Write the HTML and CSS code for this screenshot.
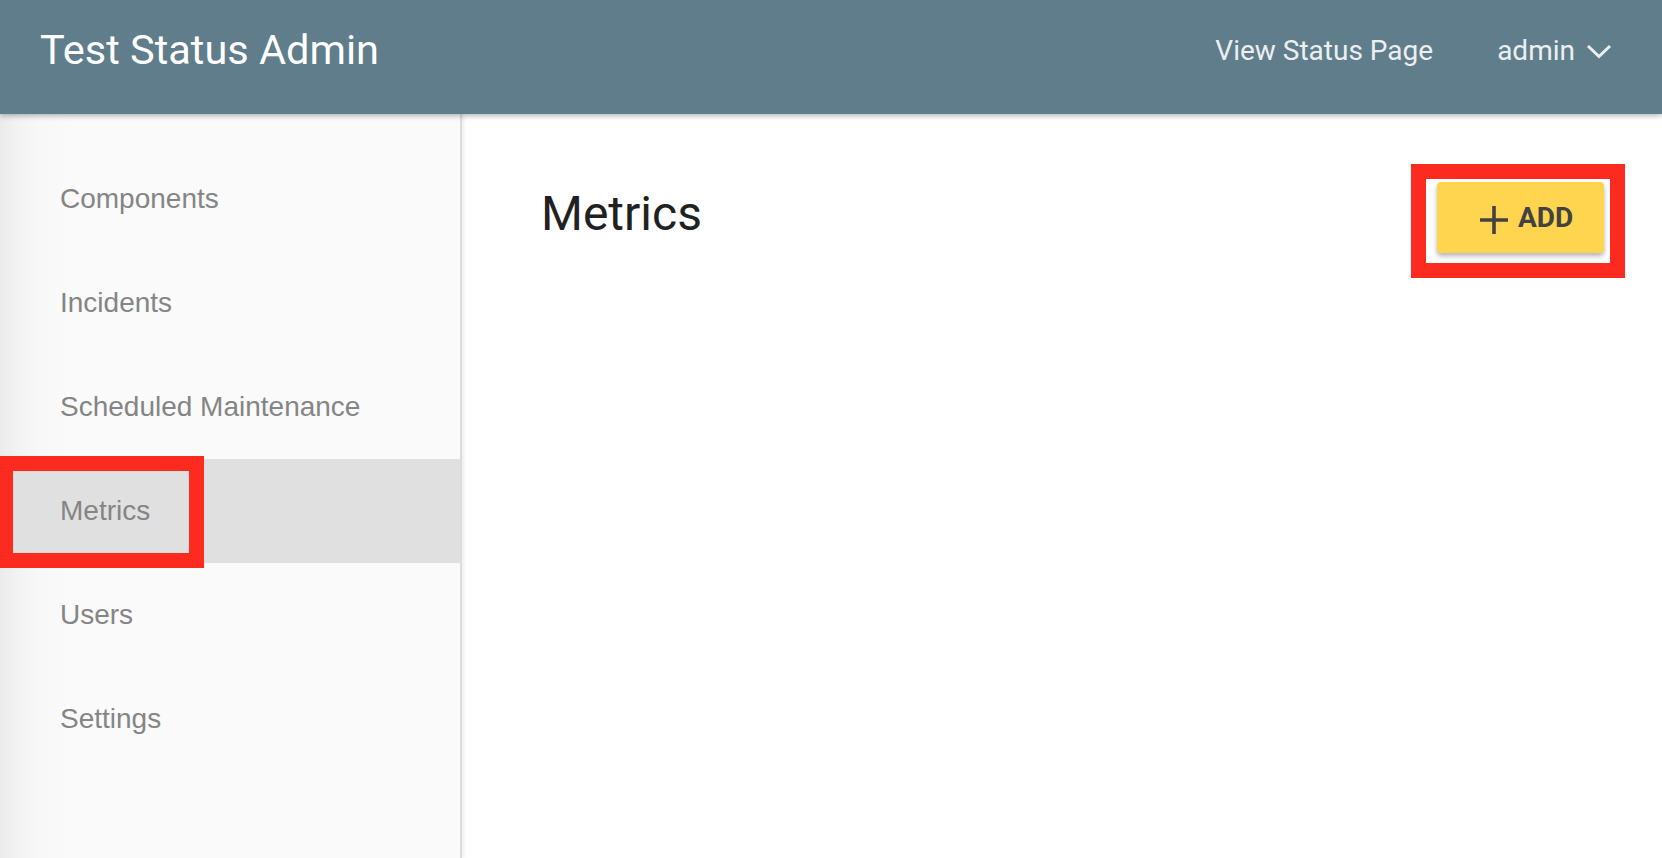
FILE: index.html
```html
<!DOCTYPE html>
<html lang="en">
<head>
<meta charset="utf-8">
<title>Test Status Admin</title>
<link rel="stylesheet" href="styles.css">
</head>
<body>
<div class="app">
  <header class="topbar">
    <div class="brand">Test Status Admin</div>
    <nav class="top-links">
      <a class="top-link" href="#">View Status Page</a>
      <a class="top-link user" href="#">admin
        <svg class="chevron" width="26" height="15" viewBox="0 0 26 15"><polyline points="2,2 13,12.5 24,2" fill="none" stroke="currentColor" stroke-width="3"/></svg>
      </a>
    </nav>
  </header>
  <div class="body">
    <aside class="sidebar">
      <ul class="side-nav">
        <li class="side-item">Components</li>
        <li class="side-item">Incidents</li>
        <li class="side-item">Scheduled Maintenance</li>
        <li class="side-item active">Metrics</li>
        <li class="side-item">Users</li>
        <li class="side-item">Settings</li>
      </ul>
      <div class="mark mark-side"></div>
    </aside>
    <main class="main">
      <div class="page-head">
        <h1 class="page-title">Metrics</h1>
        <div class="add-wrap">
          <button class="add-btn" type="button">
            <svg class="plus" width="28" height="28" viewBox="0 0 28 28"><path d="M14 0V28M0 14H28" stroke="currentColor" stroke-width="3.6" fill="none"/></svg>
            <span>ADD</span>
          </button>
          <div class="mark mark-add"></div>
        </div>
      </div>
    </main>
  </div>
</div>
</body>
</html>
```

FILE: styles.css
```css
html, body {
  margin: 0;
  padding: 0;
  height: 100%;
}
body {
  font-family: "Roboto", "Liberation Sans", sans-serif;
  background: #ffffff;
  overflow: hidden;
}
.app {
  display: flex;
  flex-direction: column;
  height: 100vh;
}
.topbar {
  position: relative;
  z-index: 2;
  flex: 0 0 114px;
  height: 114px;
  background: #607d8b;
  display: flex;
  align-items: flex-start;
  justify-content: space-between;
  padding: 0 50px 0 40px;
  box-shadow: 0 2px 5px rgba(0, 0, 0, 0.28);
}
.brand {
  color: #ffffff;
  font-size: 41.5px;
  padding-top: 25px;
  line-height: normal;
}
.top-links {
  display: flex;
  align-items: center;
  gap: 64px;
  padding-top: 34px;
}
.top-link {
  color: #eceff1;
  text-decoration: none;
  font-size: 28px;
  line-height: normal;
  display: flex;
  align-items: center;
}
.user .chevron {
  margin-left: 11px;
  margin-top: 2px;
}
.body {
  flex: 1;
  display: flex;
  min-height: 0;
}
.sidebar {
  position: relative;
  width: 460px;
  flex: 0 0 460px;
  background: linear-gradient(to right, #ebebeb 0, #f3f3f3 18px, #f8f8f8 40px, #fafafa 70px);
  border-right: 2px solid #dcdcdc;
  box-shadow: 2px 0 4px rgba(0, 0, 0, 0.08);
}
.side-nav {
  list-style: none;
  margin: 0;
  padding: 33px 0 0 0;
}
.side-item {
  height: 104px;
  line-height: 104px;
  padding-left: 60px;
  font-family: "Liberation Sans", Arial, sans-serif;
  font-size: 28px;
  color: #858585;
}
.side-item.active {
  background: #e0e0e0;
}
.mark {
  position: absolute;
  border: 15px solid #fc2a1f;
  box-sizing: border-box;
  pointer-events: none;
}
.mark-side {
  left: 0;
  top: 342px;
  width: 204px;
  height: 112px;
  border-left-width: 13px;
}
.main {
  flex: 1;
  padding: 68px 58px 0 79px;
}
.page-head {
  display: flex;
  justify-content: space-between;
  align-items: flex-start;
}
.page-title {
  margin: 4px 0 0 0;
  font-size: 48px;
  font-weight: 400;
  line-height: 56px;
  color: #212121;
}
.add-wrap {
  position: relative;
}
.add-btn {
  display: flex;
  align-items: center;
  gap: 10px;
  height: 71px;
  width: 167px;
  padding: 0 0 0 43px;
  box-sizing: border-box;
  border: none;
  border-radius: 4px;
  background: #ffd54f;
  color: #424242;
  font-family: "Roboto", sans-serif;
  font-weight: 700;
  font-size: 28px;
  box-shadow: 0 3px 5px rgba(0, 0, 0, 0.3);
}
.add-btn .plus {
  margin-top: 4px;
}
.mark-add {
  left: -26px;
  top: -18px;
  width: 214px;
  height: 114px;
}
```
